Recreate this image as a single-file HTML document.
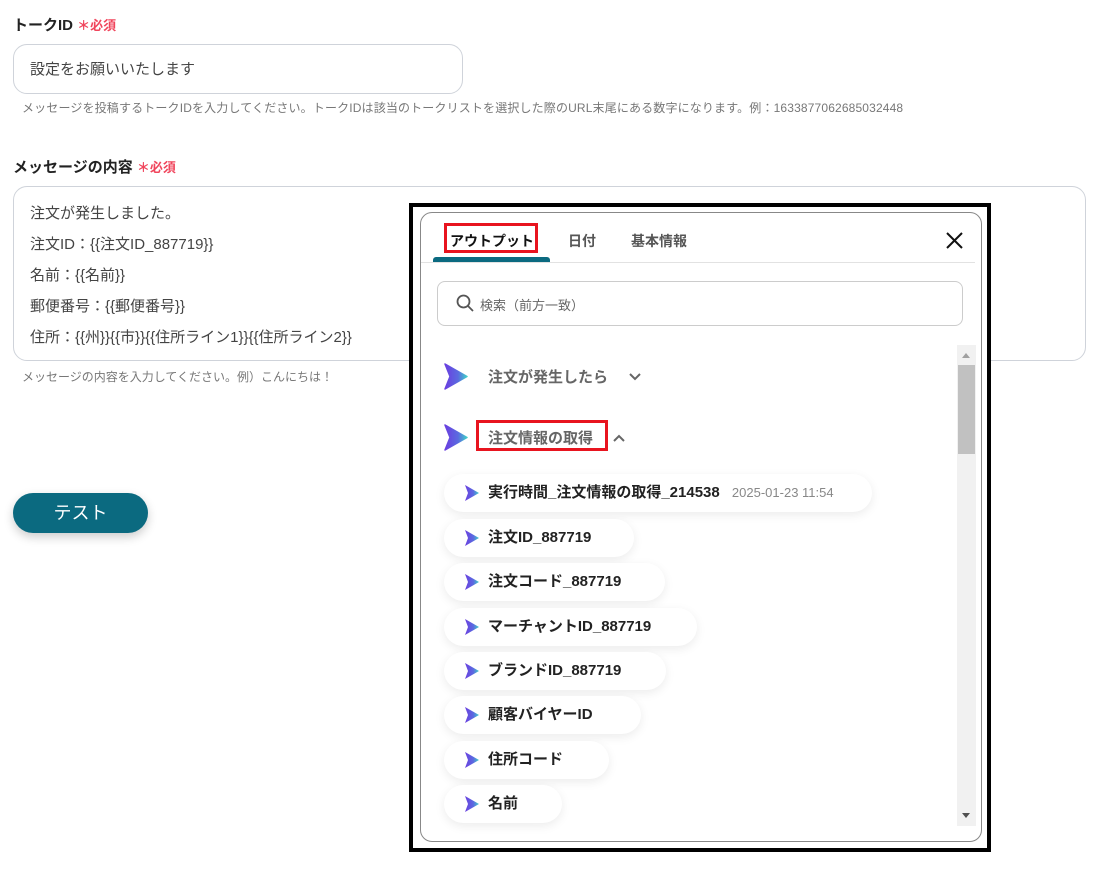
<!DOCTYPE html>
<html><head><meta charset="utf-8">
<style>
*{box-sizing:border-box;margin:0;padding:0}
body{width:1100px;height:872px;background:#fff;position:relative;overflow:hidden;font-family:"Liberation Sans","Noto Sans CJK JP",sans-serif;color:#333}
.a{position:absolute;white-space:nowrap}
.lbl{font-size:15px;font-weight:bold;color:#222}
.req{color:#f0455c;font-size:13px;font-weight:bold}
.help{font-size:12px;color:#777}
.pill{position:absolute;left:444px;height:38px;border-radius:19px;background:#fff;box-shadow:0 3px 10px rgba(0,0,0,0.08);font-size:15px;font-weight:bold;color:#222;line-height:38px;padding-left:44px}
.pill svg{position:absolute;left:20px;top:10px}
</style></head><body>
<div class="a lbl" style="left:13px;top:14px">トークID <span class="req">＊必須</span></div>
<div class="a" style="left:13px;top:44px;width:450px;height:50px;border:1px solid #cfd3da;border-radius:14px"></div>
<div class="a" style="left:30px;top:58px;font-size:15px;color:#444">設定をお願いいたします</div>
<div class="a help" style="left:22px;top:99px;letter-spacing:0.15px">メッセージを投稿するトークIDを入力してください。トークIDは該当のトークリストを選択した際のURL末尾にある数字になります。例：1633877062685032448</div>
<div class="a lbl" style="left:13px;top:156px">メッセージの内容 <span class="req">＊必須</span></div>
<div class="a" style="left:13px;top:186px;width:1073px;height:175px;border:1px solid #cfd3da;border-radius:14px"></div>
<div class="a" style="left:30px;top:198px;font-size:15px;color:#444;line-height:31px">注文が発生しました。<br>注文ID：{{注文ID_887719}}<br>名前：{{名前}}<br>郵便番号：{{郵便番号}}<br>住所：{{州}}{{市}}{{住所ライン1}}{{住所ライン2}}</div>
<div class="a help" style="left:22px;top:368px">メッセージの内容を入力してください。例）こんにちは！</div>
<div class="a" style="left:13px;top:493px;width:135px;height:40px;border-radius:20px;background:#0b6a80;color:#fff;font-size:18px;text-align:center;line-height:40px;box-shadow:0 4px 10px rgba(0,0,0,0.2)">テスト</div>

<div class="a" style="left:409px;top:203px;width:582px;height:649px;border:4px solid #000;background:#fff"></div>
<div class="a" style="left:420px;top:212px;width:562px;height:630px;border:1px solid #888;border-radius:12px;background:#fff;overflow:hidden">
</div>
<div class="a" style="left:444px;top:223px;width:94px;height:30px;border:3px solid #e8141f"></div>
<div class="a" style="left:450px;top:231px;font-size:14px;color:#111;font-weight:bold">アウトプット</div>
<div class="a" style="left:568px;top:231px;font-size:14px;color:#555;font-weight:bold">日付</div>
<div class="a" style="left:631px;top:231px;font-size:14px;color:#555;font-weight:bold">基本情報</div>
<svg class="a" style="left:945px;top:231px" width="19" height="19" viewBox="0 0 19 19"><path d="M2 2L17 17M17 2L2 17" stroke="#111" stroke-width="2"/></svg>
<div class="a" style="left:421px;top:262px;width:554px;height:1px;background:#e2e2e2"></div>
<div class="a" style="left:433px;top:257px;width:117px;height:5px;background:#0b6a80;border-radius:3px 3px 0 0"></div>
<div class="a" style="left:437px;top:281px;width:526px;height:45px;border:1px solid #ccc;border-radius:8px"></div>
<svg class="a" style="left:456px;top:294px" width="18" height="18" viewBox="0 0 18 18"><circle cx="7.5" cy="7.5" r="6" fill="none" stroke="#555" stroke-width="1.8"/><path d="M12 12L17 17" stroke="#555" stroke-width="1.8"/></svg>
<div class="a" style="left:480px;top:295px;font-size:13px;color:#666">検索（前方一致）</div>
<div class="a" style="left:957px;top:345px;width:19px;height:481px;background:#f1f1f1"></div>
<div class="a" style="left:958px;top:365px;width:17px;height:89px;background:#c1c1c1"></div>
<svg class="a" style="left:961px;top:351px" width="10" height="8"><path d="M1 7L5 2L9 7Z" fill="#a0a0a0"/></svg>
<svg class="a" style="left:961px;top:812px" width="10" height="8"><path d="M1 1L5 6L9 1Z" fill="#505050"/></svg>

<svg class="a" style="left:444px;top:363px" width="24" height="27" viewBox="0 0 24 27"><defs><linearGradient id="g" x1="0" x2="1"><stop offset="0" stop-color="#6a3ee0"/><stop offset="0.6" stop-color="#5b6be0"/><stop offset="1" stop-color="#3fd0c8"/></linearGradient></defs><path d="M1 1L23 13.5L1 26L6 13.5Z" fill="url(#g)" stroke="url(#g)" stroke-width="1.5" stroke-linejoin="round"/></svg>
<div class="a" style="left:488px;top:366px;font-size:15px;font-weight:bold;color:#666">注文が発生したら</div>
<svg class="a" style="left:629px;top:373px" width="12" height="8"><path d="M1 1L6 6L11 1" fill="none" stroke="#666" stroke-width="2"/></svg>
<svg class="a" style="left:444px;top:424px" width="24" height="27" viewBox="0 0 24 27"><path d="M1 1L23 13.5L1 26L6 13.5Z" fill="url(#g)" stroke="url(#g)" stroke-width="1.5" stroke-linejoin="round"/></svg>
<div class="a" style="left:476px;top:420px;width:132px;height:31px;border:3px solid #e8141f"></div>
<div class="a" style="left:488px;top:427px;font-size:15px;font-weight:bold;color:#666">注文情報の取得</div>
<svg class="a" style="left:613px;top:434px" width="12" height="8"><path d="M1 7L6 2L11 7" fill="none" stroke="#666" stroke-width="2"/></svg>

<div class="pill" style="top:474px;width:428px">実行時間_注文情報の取得_214538 <span style="font-weight:normal;color:#888;font-size:13px;margin-left:8px">2025-01-23 11:54</span><svg width="16" height="18" viewBox="0 0 16 18"><path d="M1 1L15 9L1 17L4 9Z" fill="url(#g)"/></svg></div>
<div class="pill" style="top:519px;width:190px">注文ID_887719<svg width="16" height="18" viewBox="0 0 16 18"><path d="M1 1L15 9L1 17L4 9Z" fill="url(#g)"/></svg></div>
<div class="pill" style="top:563px;width:221px">注文コード_887719<svg width="16" height="18" viewBox="0 0 16 18"><path d="M1 1L15 9L1 17L4 9Z" fill="url(#g)"/></svg></div>
<div class="pill" style="top:608px;width:253px">マーチャントID_887719<svg width="16" height="18" viewBox="0 0 16 18"><path d="M1 1L15 9L1 17L4 9Z" fill="url(#g)"/></svg></div>
<div class="pill" style="top:652px;width:222px">ブランドID_887719<svg width="16" height="18" viewBox="0 0 16 18"><path d="M1 1L15 9L1 17L4 9Z" fill="url(#g)"/></svg></div>
<div class="pill" style="top:696px;width:197px">顧客バイヤーID<svg width="16" height="18" viewBox="0 0 16 18"><path d="M1 1L15 9L1 17L4 9Z" fill="url(#g)"/></svg></div>
<div class="pill" style="top:741px;width:165px">住所コード<svg width="16" height="18" viewBox="0 0 16 18"><path d="M1 1L15 9L1 17L4 9Z" fill="url(#g)"/></svg></div>
<div class="pill" style="top:785px;width:118px">名前<svg width="16" height="18" viewBox="0 0 16 18"><path d="M1 1L15 9L1 17L4 9Z" fill="url(#g)"/></svg></div>
</body></html>
